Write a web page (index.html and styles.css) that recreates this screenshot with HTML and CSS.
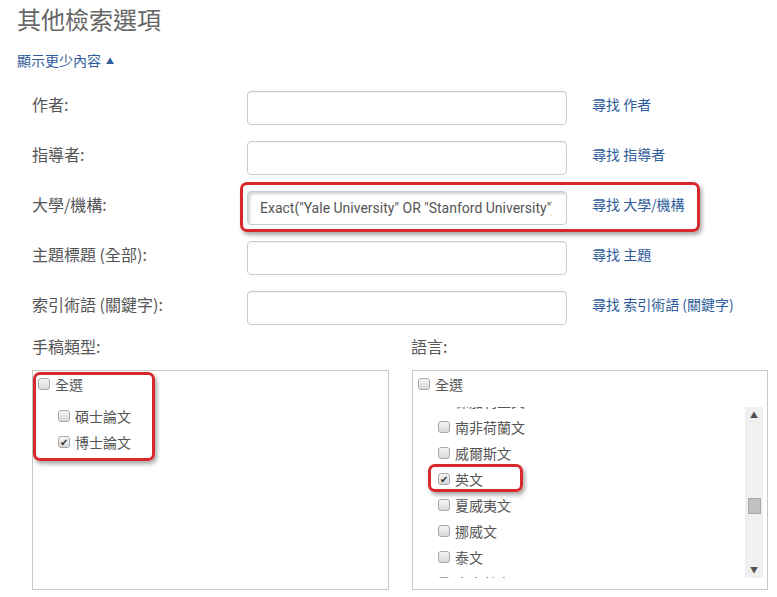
FILE: index.html
```html
<!DOCTYPE html>
<html lang="zh-Hant">
<head>
  <meta charset="UTF-8" />
  <meta name="viewport" content="width=device-width, initial-scale=1.0"/>
  <title>其他檢索選項</title>
  <link rel="stylesheet" href="styles.css">
</head>
<body>
  <div class="page">
    <h2 class="title">其他檢索選項</h2>
    <a href="#" class="toggle">顯示更少內容<span class="arrow">▲</span></a>

    <div class="fields">
      <label class="field-label">作者:</label>
      <input type="text" class="field-input">
      <a href="#" class="field-link">尋找 作者</a>

      <label class="field-label">指導者:</label>
      <input type="text" class="field-input">
      <a href="#" class="field-link">尋找 指導者</a>

      <label class="field-label">大學/機構:</label>
      <input type="text" class="field-input filled" value='Exact("Yale University" OR "Stanford University")'>
      <a href="#" class="field-link">尋找 大學/機構</a>

      <label class="field-label">主題標題 (全部):</label>
      <input type="text" class="field-input">
      <a href="#" class="field-link">尋找 主題</a>

      <label class="field-label">索引術語 (關鍵字):</label>
      <input type="text" class="field-input">
      <a href="#" class="field-link">尋找 索引術語 (關鍵字)</a>
    </div>

    <div class="filters">
      <div class="filter">
        <div class="filter-label">手稿類型:</div>
        <div class="filter-box">
          <div class="check"><span class="box"></span>全選</div>
          <div class="sub-list">
            <div class="check"><span class="box"></span>碩士論文</div>
            <div class="check"><span class="box checked">✔</span>博士論文</div>
          </div>
        </div>
      </div>

      <div class="filter">
        <div class="filter-label">語言:</div>
        <div class="filter-box">
          <div class="check"><span class="box"></span>全選</div>
          <div class="scroll-list">
            <div class="scroll-view">
              <div class="scroll-items">
                <div class="check"><span class="box"></span>保加利亞文</div>
                <div class="check"><span class="box"></span>南非荷蘭文</div>
                <div class="check"><span class="box"></span>威爾斯文</div>
                <div class="check"><span class="box checked">✔</span>英文</div>
                <div class="check"><span class="box"></span>夏威夷文</div>
                <div class="check"><span class="box"></span>挪威文</div>
                <div class="check"><span class="box"></span>泰文</div>
                <div class="check"><span class="box"></span>烏克蘭文</div>
              </div>
            </div>
            <div class="scrollbar">
              <span class="sb-arrow">▲</span>
              <div class="sb-track"><div class="sb-thumb"></div></div>
              <span class="sb-arrow">▼</span>
            </div>
          </div>
        </div>
      </div>
    </div>

    <!-- red annotation frames drawn over the screenshot -->
    <div class="mark mark-school"></div>
    <div class="mark mark-type"></div>
    <div class="mark mark-lang"></div>
  </div>
</body>
</html>
```

FILE: styles.css
```css
* { box-sizing: border-box; }
body {
  margin: 0;
  background: #fff;
  color: #555;
  font-family: "Noto Sans CJK TC", "Noto Sans", sans-serif;
}
.page {
  position: relative;
  width: 777px;
  padding: 3px 9px 0 17px;
}
.title {
  margin: 0;
  font-size: 24px;
  font-weight: normal;
  line-height: 32px;
  color: #666;
}
.toggle {
  display: inline-block;
  margin-top: 15px;
  font-size: 14px;
  line-height: 20px;
  color: #2e5c9a;
  text-decoration: none;
}
.toggle .arrow {
  margin-left: 5px;
  font-size: 8px;
  vertical-align: 2px;
}
.fields {
  display: grid;
  grid-template-columns: 190px 320px auto;
  column-gap: 25px;
  row-gap: 16px;
  margin-top: 20px;
  padding-left: 15px;
}
.field-label {
  font-size: 16px;
  line-height: 26px;
  color: #555;
}
.field-input {
  width: 320px;
  height: 34px;
  padding: 0 14px 0 12px;
  border: 1px solid #ccc;
  border-radius: 4px;
  box-shadow: inset 0 1px 1px rgba(0,0,0,0.06);
  font-family: Roboto, "Noto Sans", sans-serif;
  font-size: 14px;
  color: #555;
}
.field-input.filled {
  box-shadow: inset 2px 2px 3px rgba(0,0,0,0.18);
}
.field-link {
  font-size: 14px;
  line-height: 26px;
  color: #2e5c9a;
  text-decoration: none;
}
.filters {
  display: grid;
  grid-template-columns: 357px 356px;
  column-gap: 23px;
  margin-top: 10px;
  padding-left: 15px;
}
.filter-label {
  font-size: 16px;
  line-height: 22px;
  margin-bottom: 13px;
}
.filter:last-child .filter-label { margin-left: -1px; }
.filter-box {
  height: 220px;
  border: 1px solid #c8c8c8;
  padding: 0 4px 0 5px;
}
.check {
  display: flex;
  align-items: center;
  height: 26px;
  font-size: 14px;
  color: #555;
  white-space: nowrap;
}
.box {
  display: inline-flex;
  align-items: center;
  justify-content: center;
  width: 12px;
  height: 12px;
  margin-right: 5px;
  border: 1px solid #a8a8a8;
  border-radius: 3px;
  background: linear-gradient(#f6f6f6, #d9d9d9);
  font-size: 10px;
  line-height: 1;
  color: #333;
}
.sub-list {
  margin-top: 6px;
  padding-left: 20px;
}
.scroll-list {
  display: flex;
  margin-top: 10px;
  height: 171px;
}
.scroll-view {
  flex: 1;
  overflow: hidden;
  padding-left: 20px;
}
.scroll-items {
  margin-top: -19px;
}
.scrollbar {
  display: flex;
  flex-direction: column;
  width: 18px;
  background: #f0f0f0;
}
.sb-arrow {
  height: 16px;
  font-size: 8px;
  line-height: 16px;
  text-align: center;
  color: #505050;
}
.sb-track {
  flex: 1;
  padding: 75px 2px 0 3px;
}
.sb-thumb {
  height: 16px;
  background: #c1c1c1;
  border: 1px solid #a9a9a9;
}
.mark {
  position: absolute;
  border: 3px solid #d7282d;
  border-radius: 7px;
  box-shadow: 2px 3px 4px rgba(0,0,0,0.35);
}
.mark-school { left: 240px; top: 182px; width: 460px; height: 50px; }
.mark-type { left: 33px; top: 372px; width: 122px; height: 89px; }
.mark-lang { left: 428px; top: 464px; width: 95px; height: 28px; }
```
